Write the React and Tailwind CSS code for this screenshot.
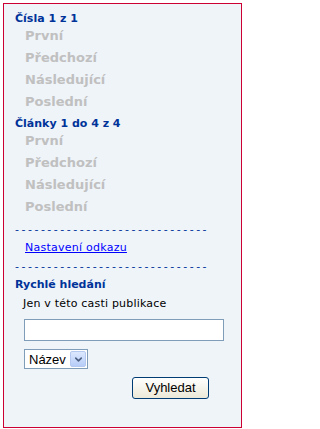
import { ChevronDown } from 'lucide-react'

const pages = ['První', 'Předchozí', 'Následující', 'Poslední']
const dashes = '------------------------------'

function Heading({ children, className = '' }) {
  return <div className={`font-bold text-[#003399] text-[11px] leading-[12px] ${className}`}>{children}</div>
}

function DisabledList() {
  return (
    <div className="pl-[10px]">
      {pages.map(p => (
        <div key={p} className="font-bold text-[#c0c0c0] text-[13px] leading-[22px]">{p}</div>
      ))}
    </div>
  )
}

export default function App() {
  return (
    <div className="p-[3px] bg-white">
      <div
        className="w-[239px] h-[425px] border border-[#cc0033] bg-[#eff4f9] pl-[11px] pt-[9px] text-[11px]"
        style={{ fontFamily: '"DejaVu Sans", Verdana, sans-serif' }}
      >
        <Heading>Čísla 1 z 1</Heading>
        <DisabledList />
        <Heading className="mt-[5px]">Články 1 do 4 z 4</Heading>
        <DisabledList />

        <div className="mt-[2px] text-[#003399] leading-[20px] tracking-[2.5px]">{dashes}</div>
        <div className="pl-[10px] leading-[16px] tracking-[0.25px]">
          <a href="#" className="text-[#0000ff] underline">Nastavení odkazu</a>
        </div>
        <div className="text-[#003399] leading-[22px] tracking-[2.5px]">{dashes}</div>

        <Heading className="mt-[1px]">Rychlé hledání</Heading>
        <div className="mt-[6px] pl-[8px] text-black leading-[14px] tracking-[0.2px]">Jen v této casti publikace</div>

        <div className="pl-[9px] pt-[8px]" style={{ fontFamily: '"Liberation Sans", Arial, sans-serif' }}>
          <input
            type="text"
            className="block w-[200px] h-[22px] border border-[#7f9db9] bg-white outline-none px-1 text-[13px]"
          />
          <div className="mt-[8px] flex items-center w-[64px] h-[20px] border border-[#7f9db9] bg-white">
            <span className="flex-1 pl-[4px] text-[13px] text-black leading-none">Název</span>
            <span className="w-[16px] h-[16px] mr-[1px] flex items-center justify-center rounded-[2px] bg-gradient-to-b from-[#dce8fd] to-[#b7cdf8] border border-[#b5c9f0]">
              <ChevronDown size={11} strokeWidth={3.5} className="text-[#4d6185]" />
            </span>
          </div>
          <div className="flex pl-[108px] mt-[8px]">
            <button className="w-[77px] h-[22px] rounded-[3px] border border-[#003c74] bg-gradient-to-b from-white to-[#ece9d8] text-[13px] text-black">
              Vyhledat
            </button>
          </div>
        </div>
      </div>
    </div>
  )
}
